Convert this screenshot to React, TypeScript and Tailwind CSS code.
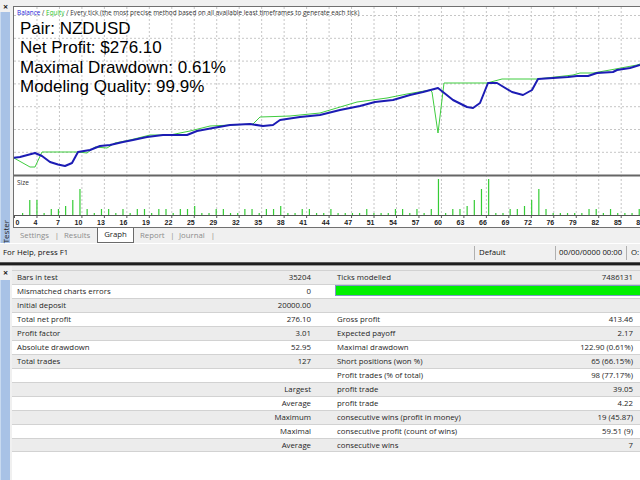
const bars = [
  2, 15, 15, 2, 6, 6, 9, 15, 26, 6, 2, 6, 6, 2, 6, 2, 6, 6, 2, 6, 6, 2, 6, 6, 9, 2, 2, 6, 6, 2, 2, 6, 6, 2, 6, 6, 9, 2, 2, 6,
  6, 2, 2, 6, 2, 2, 2, 2, 6, 2, 2, 2, 6, 6, 2, 6, 2, 6, 36, 2, 6, 6, 9, 15, 26, 36, 2, 2, 6, 6, 9, 15, 26, 6, 2, 2, 2, 2, 2, 6,
  6, 2, 6, 2, 2, 2, 6,
];

const labels = [0, 4, 7, 10, 13, 16, 19, 22, 25, 29, 32, 35, 38, 41, 44, 47, 51, 54, 57, 60, 63, 66, 69, 72, 76, 79, 82, 85, 88];

const balance =
  "14,157.7 20,157 35,153 42,156 50,162 58,164.5 65,166 72,163 78,152 90,150 100,146 110,145 123,142 133,140 147,137 163,135 177,135 187,135 197,131 213,128 230,125 250,124 263,126 273,125 280,120 300,117 310,116 320,115 340,110 360,106 375,102 393,100 410,95 423,92 438,88 453,100 467,107 473,108 480,103 488,83 497,83 512,92 523,95 532,90 538,79 553,78 568,77 577,76 588,76 597,73 613,72 617,70 630,68 640,65";

const equity =
  "14,158 30,167 35,167 42,152 78,152 87,153 95,147 107,148 115,143 130,140 150,135 170,135 190,131 210,126 253,124 257,120 260,117 290,116 320,113 357,102 387,98 407,94 430,90 432,92 438,133 444,83 487,83 502,79 537,79 573,75 580,73 593,73 610,70 637,65 640,64";

type Row = { l?: string; lv?: string; r?: string; rv?: string; bar?: boolean };

const rows: Row[] = [
  { l: "Bars in test", lv: "35204", r: "Ticks modelled", rv: "7486131" },
  { l: "Mismatched charts errors", lv: "0", bar: true },
  { l: "Initial deposit", lv: "20000.00" },
  { l: "Total net profit", lv: "276.10", r: "Gross profit", rv: "413.46" },
  { l: "Profit factor", lv: "3.01", r: "Expected payoff", rv: "2.17" },
  { l: "Absolute drawdown", lv: "52.95", r: "Maximal drawdown", rv: "122.90 (0.61%)" },
  { l: "Total trades", lv: "127", r: "Short positions (won %)", rv: "65 (66.15%)" },
  { r: "Profit trades (% of total)", rv: "98 (77.17%)" },
  { lv: "Largest", r: "profit trade", rv: "39.05" },
  { lv: "Average", r: "profit trade", rv: "4.22" },
  { lv: "Maximum", r: "consecutive wins (profit in money)", rv: "19 (45.87)" },
  { lv: "Maximal", r: "consecutive profit (count of wins)", rv: "59.51 (9)" },
  { lv: "Average", r: "consecutive wins", rv: "7" },
];

const gx = labels.map((_, k) => 14.5 + 22.47 * k);

function Chart() {
  return (
    <svg className="absolute inset-0" width={626} height={220} viewBox="14 7 626 220">
      {[15.5, 38.3, 61.1, 83.9, 106.7, 129.5, 152.3].map((y) => (
        <line key={y} x1={14} x2={640} y1={y} y2={y} stroke="#c6c6c6" strokeDasharray="2 2" />
      ))}
      {gx.slice(1).map((x) => (
        <line key={x} x1={x} x2={x} y1={7} y2={215} stroke="#c6c6c6" strokeDasharray="2 2" />
      ))}
      <line x1={14} x2={640} y1={175.5} y2={175.5} stroke="#666" strokeWidth={2} />
      {bars.map((h, i) => (
        <rect key={i} x={22 + 7.17 * i} y={215 - h} width={1.2} height={h} fill="#35cc35" />
      ))}
      <line x1={14} x2={640} y1={215.5} y2={215.5} stroke="#555" />
      {gx.map((x) => (
        <line key={"t" + x} x1={x} x2={x} y1={215.5} y2={218} stroke="#555" />
      ))}
      {labels.map((n, k) => (
        <text
          key={n}
          x={k === 0 ? 15.5 : gx[k] + 0.5}
          y={224.5}
          textAnchor={k === 0 ? "start" : "end"}
          fontSize={7}
          fontFamily="Liberation Sans, sans-serif"
          fontWeight={700}
          fill="#222"
        >
          {n}
        </text>
      ))}
      <text x={17} y={184.5} fontSize={6.5} fontFamily="Open Sans, sans-serif" fill="#333">
        Size
      </text>
      <polyline points={equity} fill="none" stroke="#3fcc3f" strokeWidth={1} />
      <polyline points={balance} fill="none" stroke="#1c1cb4" strokeWidth={2} strokeLinejoin="round" />
    </svg>
  );
}

function Strip({ head, children }: { head: string; children?: React.ReactNode }) {
  return (
    <div className="w-[12px] shrink-0 flex flex-col">
      <div className={head + " pl-[3px] text-[9px] font-bold leading-[9px] text-[#222]"}>×</div>
      <div className="flex-1 w-[10px] bg-[#a8c2e6] border-l border-[#c8daf0] flex flex-col justify-end items-center">
        {children}
      </div>
    </div>
  );
}

export default function App() {
  return (
    <div className="w-[640px] h-[480px] overflow-hidden bg-[#f0f0f0] flex flex-col font-['Open_Sans',sans-serif] text-[#1e1e1e]">
      <div className="flex h-[243px]">
        <div className="w-[13px] shrink-0 flex">
          <Strip head="h-[12px] pt-[2px]">
            <span className="[writing-mode:vertical-rl] rotate-180 text-[8px] leading-[9px] pb-[1px] text-[#222]">Tester</span>
          </Strip>
        </div>
        <div className="flex-1 flex flex-col pt-[6px]">
          <div className="relative h-[222px] bg-white border-t border-b border-l border-[#707070]">
            <Chart />
            <div className="relative pl-[3px] pt-[2px]">
              <div className="text-[6.4px] leading-[8px] text-[#333] whitespace-nowrap">
                <span className="text-[#2424d8]">Balance</span> / <span className="text-[#2fc72f]">Equity</span> / Every tick (the most
                precise method based on all available least timeframes to generate each tick)
              </div>
              <div className="mt-[2px] pl-[3px] font-['Liberation_Sans',Arial,sans-serif] text-[17px] leading-[19.3px] text-black">
                <div>Pair: NZDUSD</div>
                <div>Net Profit: $276.10</div>
                <div>Maximal Drawdown: 0.61%</div>
                <div>Modeling Quality: 99.9%</div>
              </div>
            </div>
          </div>
          <div className="h-[15px] flex items-stretch pl-[7px] text-[7.8px] text-[#8c8c8c]">
            <div className="w-[33px] flex items-center">Settings</div>
            <div className="w-[8px] flex items-center justify-center">|</div>
            <div className="w-[36px] flex items-center pl-[3px]">Results</div>
            <div className="w-[37px] flex items-center justify-center bg-white border-x border-b border-[#6b6b6b] text-[#1a1a1a]">Graph</div>
            <div className="w-[35px] flex items-center pl-[6px]">Report</div>
            <div className="w-[7px] flex items-center justify-center">|</div>
            <div className="w-[34px] flex items-center pl-[3px]">Journal</div>
            <div className="w-[6px] flex items-center justify-center">|</div>
          </div>
        </div>
      </div>

      <div className="h-[19px] flex items-stretch border-t border-white text-[7.8px] text-[#111]">
        <div className="flex-1 flex items-center pl-[3px]">For Help, press F1</div>
        <div className="w-[81px] my-[2px] flex items-center pl-[4px] border-l border-[#b0b0b0]">Default</div>
        <div className="w-[71px] my-[2px] flex items-center pl-[3px] border-l border-[#b0b0b0]">00/00/0000 00:00</div>
        <div className="w-[14px] my-[2px] flex items-center pl-[4px] border-l border-[#b0b0b0]">O:</div>
      </div>
      <div className="h-[1px] bg-[#5a5a5a]" />
      <div className="h-[2px] bg-[#1e1e1e]" />
      <div className="h-[1px] bg-[#9a9a9a]" />

      <div className="flex-1 flex">
        <Strip head="h-[14px] pt-[2px]" />
        <div className="flex-1 bg-white flex flex-col">
          <div className="h-[4px] bg-[#ececec]" />
          {rows.map((row, i) => (
            <div
              key={i}
              className={
                (i % 2 === 0 ? "bg-[#ececec]" : "bg-white") +
                " h-[14px] flex border-t border-[#d2d2d2] text-[7.8px] leading-[13px]" +
                (i === rows.length - 1 ? " border-b" : "")
              }
            >
              <div className="w-[308px] flex items-center justify-between pl-[5px] pr-[9px]">
                <span>{row.l ?? ""}</span>
                <span>{row.lv ?? ""}</span>
              </div>
              {row.bar ? (
                <div className="flex-1 pl-[15px] flex items-start">
                  <div className="flex-1 h-[11px] bg-[#00f000] border-y border-l border-[#7f98c4]" />
                </div>
              ) : (
                <div className="flex-1 flex items-center justify-between pl-[17px] pr-[7px]">
                  <span>{row.r ?? ""}</span>
                  <span>{row.rv ?? ""}</span>
                </div>
              )}
            </div>
          ))}
        </div>
      </div>
    </div>
  );
}
